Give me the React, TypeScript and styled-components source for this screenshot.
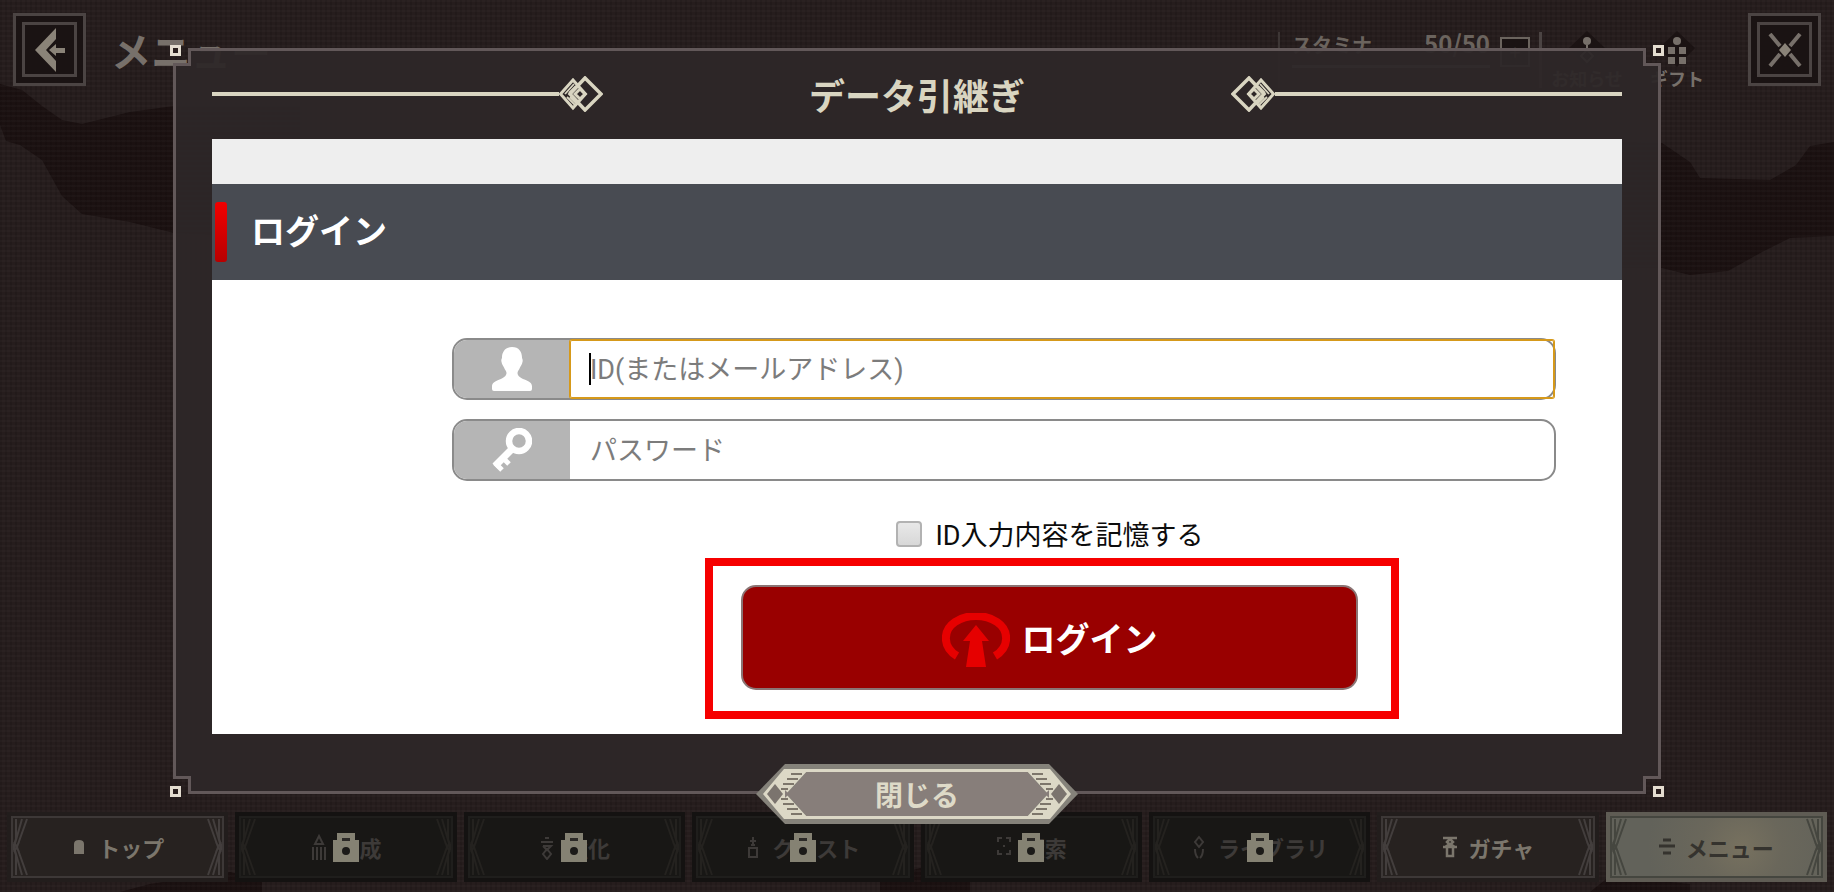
import React from "react";
import styled, { createGlobalStyle, css } from "styled-components";

const color = {
  page: "#261d1d",
  shade: "#1b1111",
  frame: "rgba(45, 39, 40, 0.95)",
  frameLine: "#625859",
  ivory: "#d9d5c1",
  dim: "#6b645e",
  slate: "#484b52",
  red: "#f60000",
  deepRed: "#990000",
  border: "#8a8a8a",
  iconCell: "#b5b5b5",
  focus: "#d6991a",
};

const GlobalStyle = createGlobalStyle`
  *, *::before, *::after { box-sizing: border-box; }
  body {
    margin: 0;
    background: ${color.page};
    font-family: Roboto, "Noto Sans CJK JP", sans-serif;
  }
  button, input { font-family: inherit; }
  button { cursor: pointer; }
  h1, h2, p { margin: 0; }
`;

const Screen = styled.div`
  position: relative;
  display: flex;
  flex-direction: column;
  min-height: 100vh;
  overflow: hidden;
  font-family: "Noto Sans CJK JP", sans-serif;
`;

const Backdrop = styled.svg`
  position: absolute;
  inset: 0;
  width: 100%;
  height: 100%;
`;

const Mesh = styled.div`
  position: absolute;
  inset: 0;
  background:
    repeating-linear-gradient(0deg, rgba(255, 255, 255, 0.02) 0 2px, transparent 2px 5px),
    repeating-linear-gradient(90deg, rgba(0, 0, 0, 0.1) 0 2px, transparent 2px 5px);
`;

/* ---------- game header ---------- */

const Header = styled.header`
  position: relative;
  display: flex;
  align-items: flex-start;
  padding: 13px;
`;

const SquareButton = styled.button`
  display: flex;
  align-items: center;
  justify-content: center;
  width: 73px;
  height: 73px;
  padding: 0;
  border: 3px solid #4b4443;
  background: #1a1313;
  outline: 3px solid #4b4443;
  outline-offset: -12px;
`;

const ScreenTitle = styled.h1`
  flex: 1;
  padding-left: 25px;
  font-size: 40px;
  line-height: 74px;
  font-weight: 700;
  color: #77706a;
`;

const Stamina = styled.div`
  display: flex;
  align-items: flex-start;
  width: 264px;
  height: 56px;
  margin-top: 19px;
  padding-left: 12px;
  border-left: 2px solid #3d3635;
  border-right: 3px solid #4b4443;
  color: ${color.dim};
`;

const StaminaValue = styled.p`
  display: flex;
  align-items: baseline;
  justify-content: space-between;
  width: 198px;
  height: 36px;
  border-bottom: 3px solid #6a6260;
  font-weight: 700;
`;

const StaminaLabel = styled.span`
  font-size: 20px;
  line-height: 22px;
`;

const StaminaCount = styled.span`
  font-size: 24px;
  line-height: 22px;
`;

const PlusButton = styled.button`
  width: 30px;
  height: 30px;
  margin: 5px 0 0 10px;
  padding: 0;
  border: 2px solid ${color.dim};
  background: #1a1313;
  color: ${color.dim};
  font-size: 20px;
  line-height: 24px;
`;

const HeaderLink = styled.button<{ $last?: boolean }>`
  display: flex;
  flex-direction: column;
  align-items: center;
  width: 90px;
  margin-top: 16px;
  margin-right: ${(p) => (p.$last ? "26px" : "0")};
  padding: 0;
  border: 0;
  background: none;
  color: #77706a;
  font-family: "Noto Sans CJK JP", sans-serif;
  font-size: 18px;
  line-height: 18px;
  font-weight: 700;
`;

/* ---------- bottom navigation ---------- */

const NavBar = styled.nav`
  position: relative;
  display: grid;
  grid-template-columns: repeat(8, 1fr);
  gap: 7px;
  margin-top: auto;
  padding: 0 7px 10px;
`;

type Tone = "normal" | "locked" | "active";

const tones = {
  normal: css`
    background: #272220;
    border-color: #221d1c;
    outline-color: #3d3837;
    color: #7b766c;
    --ornament: #433e3d;
  `,
  locked: css`
    background: #181715;
    border-color: #141211;
    outline-color: #1f1e1c;
    color: #3d3a38;
    --ornament: #24221f;
  `,
  active: css`
    background: radial-gradient(circle at 62% 50%, #77715f 0, #6a675b 30%, #62625a 70%);
    border-color: #5f5c54;
    outline-color: #45463f;
    color: #35332e;
    --ornament: #45463f;
  `,
};

const NavButton = styled.button<{ $tone: Tone }>`
  position: relative;
  display: flex;
  align-items: center;
  justify-content: space-between;
  height: 70px;
  padding: 0;
  border: 5px solid;
  outline: 2px solid;
  outline-offset: -6px;
  font-family: "Noto Sans CJK JP", sans-serif;
  font-size: 22px;
  line-height: 32px;
  font-weight: 700;
  ${(p) => tones[p.$tone]}
`;

const NavLabel = styled.span`
  display: flex;
  align-items: center;
  gap: 11px;
`;

const LockBadge = styled.svg`
  position: absolute;
  top: 50%;
  left: 50%;
  margin: -14px 0 0 -13px;
`;

/* ---------- transfer dialog ---------- */

const Overlay = styled.div`
  position: absolute;
  inset: 0;
  padding: 48px 173px;
`;

const Dialog = styled.section`
  position: relative;
  padding: 3px 39px 60px;
`;

const FrameShape = styled.div`
  position: absolute;
  inset: 0;
  border: 3px solid ${color.frameLine};
  background: ${color.frame};
  clip-path: polygon(
    15px 0, calc(100% - 15px) 0, calc(100% - 15px) 15px, 100% 15px,
    100% calc(100% - 15px), calc(100% - 15px) calc(100% - 15px), calc(100% - 15px) 100%, 15px 100%,
    15px calc(100% - 15px), 0 calc(100% - 15px), 0 15px, 15px 15px
  );
`;

type Corner = { $v: "top" | "bottom"; $h: "left" | "right" };

const Notch = styled.span<Corner>`
  position: absolute;
  ${(p) => p.$v}: -3px;
  ${(p) => p.$h}: -3px;
  width: 18px;
  height: 18px;
  border: 3px solid ${color.frameLine};
`;

const Stud = styled.span<Corner>`
  position: absolute;
  ${(p) => p.$v}: -3px;
  ${(p) => p.$h}: -3px;
  width: 11px;
  height: 11px;
  border: 3px solid #e4ddd0;
  background: #2a1f1e;
`;

const DialogHead = styled.div`
  position: relative;
  display: grid;
  grid-template-columns: 1fr 628px 1fr;
  align-items: center;
  height: 88px;
  padding-bottom: 2px;
`;

const Rule = styled.div<{ $mirrored?: boolean }>`
  display: flex;
  align-items: center;
  flex-direction: ${(p) => (p.$mirrored ? "row-reverse" : "row")};
  &::before {
    content: "";
    flex: 1;
    height: 4px;
    background: ${color.ivory};
  }
`;

const DialogTitle = styled.h2`
  font-size: 36px;
  line-height: 48px;
  font-weight: 700;
  text-align: center;
  color: ${color.ivory};
`;

const Panel = styled.div`
  position: relative;
  padding-bottom: 15px;
  background: #fff;
  font-family: Roboto, "Noto Sans CJK JP", sans-serif;
`;

const Strip = styled.div`
  height: 45px;
  background: #eee;
`;

const PanelHeading = styled.h2`
  display: flex;
  align-items: center;
  gap: 24px;
  height: 96px;
  padding-left: 3px;
  background: ${color.slate};
  color: #fff;
  font-size: 34px;
  line-height: 48px;
  font-weight: 700;
  &::before {
    content: "";
    width: 12px;
    height: 60px;
    border-radius: 3px;
    background: linear-gradient(#f20000, #b80000);
  }
`;

const Form = styled.form`
  display: flex;
  flex-direction: column;
  gap: 19px;
  padding: 58px 66px 0 240px;
`;

const Field = styled.label`
  position: relative;
  display: flex;
  height: 62px;
  border: 2px solid ${color.border};
  border-radius: 15px;
`;

const FieldIcon = styled.span`
  display: flex;
  align-items: center;
  justify-content: center;
  width: 116px;
  border-radius: 13px 0 0 13px;
  background: ${color.iconCell};
`;

const TextInput = styled.input<{ $focused?: boolean }>`
  flex: 1;
  min-width: 0;
  padding: 2px 20px 0;
  border: 0;
  border-radius: 0 13px 13px 0;
  background: transparent;
  font-size: 27px;
  color: #000;
  outline: none;
  ${(p) =>
    p.$focused &&
    css`
      border-radius: 2px;
      box-shadow: 0 0 0 1px ${color.focus}, inset 0 0 0 1px ${color.focus};
    `}
  &::placeholder {
    color: #7c7c7c;
    opacity: 1;
  }
`;

const Caret = styled.span`
  position: absolute;
  top: 13px;
  left: 135px;
  width: 2px;
  height: 32px;
  background: #000;
`;

const Actions = styled.div`
  display: flex;
  flex-direction: column;
  align-items: center;
  margin-top: 14px;
  margin-left: 96px;
`;

const Remember = styled.label`
  display: flex;
  align-items: center;
  gap: 13px;
  height: 44px;
  margin-right: 4px;
  font-size: 27px;
  line-height: 40px;
  color: #0c0c0c;
`;

const Checkbox = styled.input`
  appearance: none;
  width: 26px;
  height: 26px;
  margin: 0 0 4px;
  border: 2px solid #b2b2b2;
  border-radius: 4px;
  background: linear-gradient(#e8e8e8, #d8d8d8);
`;

const Highlight = styled.div`
  width: 100%;
  max-width: 694px;
  padding: 19px 33px 21px 28px;
  border: 8px solid ${color.red};
`;

const SubmitButton = styled.button`
  display: flex;
  align-items: center;
  justify-content: center;
  gap: 12px;
  width: 100%;
  height: 105px;
  padding: 4px 0 0;
  border: 2px solid #8a7474;
  border-radius: 15px;
  background: ${color.deepRed};
  color: #fff;
  font-size: 34px;
  line-height: 48px;
  font-weight: 700;
`;

const CloseButton = styled.button`
  position: absolute;
  bottom: -30px;
  left: 50%;
  display: grid;
  place-items: center;
  width: 322px;
  height: 60px;
  margin-left: -161px;
  padding: 0;
  border: 0;
  background: none;
  color: #dedac8;
  font-family: "Noto Sans CJK JP", sans-serif;
  font-size: 28px;
  line-height: 40px;
  font-weight: 700;
  > * {
    grid-area: 1 / 1;
  }
`;

/* ---------- drawings ---------- */

const Diamonds = ({ flip }: { flip?: boolean }) => (
  <svg width="44" height="36" viewBox="0 0 44 36" fill="none" stroke={color.ivory}>
    <g transform={flip ? "matrix(-1 0 0 1 44 0)" : undefined}>
      <path d="M1.500 18 14 4l12.500 14L14 32z" strokeWidth="3" />
      <path d="M11 18 26 2l16 16-16 16z" strokeWidth="3.500" />
      <path d="M6 18l9-10M8 21l8 8M10 17l7-7M11 21l6 6" strokeWidth="1.800" />
      <path d="M16 18l5-5 5 5-5 5z" strokeWidth="3" />
    </g>
  </svg>
);

const Ornament = ({ flip }: { flip?: boolean }) => (
  <svg width="16" height="60" viewBox="0 0 16 60" fill="none" stroke="var(--ornament)" strokeWidth="2">
    <path
      transform={flip ? "matrix(-1 0 0 1 16 0)" : undefined}
      d="M15 2 5 30l10 28M10 2 2 30l8 28M4 2v20L1 30l3 8v20M2 25l5 10M7 25 2 35"
    />
  </svg>
);

const ClosePlate = () => {
  const end = (
    <>
      <path d="M28 5h25L30 30l23 25H28L7 30z" fill="#dcd8c6" stroke="none" />
      <path
        d="M35 10h11M31 15h11M27 20h11M25 25h7M35 50h11M31 45h11M27 40h11M25 35h7"
        stroke="#7d766b"
        strokeWidth="2"
      />
      <path d="M19 20 11 30l8 10 8-10z" fill="#7b746e" stroke="none" />
      <path d="M29 26l4 4-4 4z" fill="#877e7a" stroke="none" />
    </>
  );
  return (
    <svg width="322" height="60" viewBox="0 0 322 60" fill="none" stroke="#dcd8c6">
      <path d="M0 30 29 0h264l29 30-29 30H29z" fill="#85827a" stroke="none" />
      <path d="M52 6.500h218L291 30l-21 23.500H52L31 30z" fill="#877e7a" stroke="none" />
      <path d="M28 6.500h266M28 53.500h266" strokeWidth="3" />
      <g>{end}</g>
      <g transform="matrix(-1 0 0 1 322 0)">{end}</g>
    </svg>
  );
};

const Lock = () => (
  <LockBadge width="26" height="29" viewBox="0 0 26 29">
    <path d="M4 0h18v7h4v22H0V7h4z" fill="#858273" />
    <path d="M9 5h8v3H9z" fill="#2b2926" />
    <circle cx="13" cy="18" r="4" fill="#1b1a18" />
  </LockBadge>
);

const navIcons: Record<string, React.ReactNode> = {
  top: <path d="M3 20V10q0-4 5-4t5 4v10z" fill="currentColor" stroke="none" />,
  train: <path d="M8 2l4 8H4zM2 13v13M6 13v13M10 13v13M14 13v13" />,
  enhance: <path d="M2 8h12M6 4h4M4 12h8l-4 4-4-4M8 15l4 5-4 5-4-5z" />,
  quest: <path d="M8 3v8M5 7h6M4 14h8v9H4zM6 11h4" />,
  search: <path d="M2 8V4h4M10 4h4v4M14 16v4h-4M6 20H2v-4M7 12h2" />,
  library: <path d="M8 3l4 5-4 5-4-5zM4 15q0 6 3 9M12 15q0 6-3 9" />,
  gacha: <path d="M1 4h14M5 8l3-3 3 3-3 3zM1 13h14M3 13l5-3 5 3M5 14v8h6v-8" strokeWidth="2.500" />,
  menu: <path d="M4 6h8M0 12h16M4 19h8" strokeWidth="3" />,
};

const NavIcon = ({ name }: { name: string }) => (
  <svg width="16" height="26" viewBox="0 0 16 26" fill="none" stroke="currentColor" strokeWidth="2">
    {navIcons[name]}
  </svg>
);

const navItems: { icon: string; label: string; tone: Tone }[] = [
  { icon: "top", label: "トップ", tone: "normal" },
  { icon: "train", label: "育成", tone: "locked" },
  { icon: "enhance", label: "強化", tone: "locked" },
  { icon: "quest", label: "クエスト", tone: "locked" },
  { icon: "search", label: "探索", tone: "locked" },
  { icon: "library", label: "ライブラリ", tone: "locked" },
  { icon: "gacha", label: "ガチャ", tone: "normal" },
  { icon: "menu", label: "メニュー", tone: "active" },
];

const corners: Corner[] = [
  { $v: "top", $h: "left" },
  { $v: "top", $h: "right" },
  { $v: "bottom", $h: "left" },
  { $v: "bottom", $h: "right" },
];

export default function App() {
  return (
    <Screen>
      <GlobalStyle />
      <Backdrop viewBox="0 0 1834 892" preserveAspectRatio="none" aria-hidden="true">
        <g fill={color.shade}>
          <path d="M0 84 22 90 42 106 62 120 82 124 130 112 174 106 300 106V240L174 233 130 222 82 214 62 196 52 178 42 160 20 145 6 141 0 125z" />
          <path d="M1560 140 1662 143 1690 162 1700 178 1770 180 1796 165 1810 146 1834 142V236L1790 238 1762 252 1728 271 1690 275 1662 268H1560z" />
          <path d="M120 892 150 884 230 872 262 880V892zM880 892V880L920 868 970 880V892zM1590 892 1610 876 1690 884V892z" />
        </g>
      </Backdrop>
      <Mesh />

      <Header>
        <SquareButton type="button" aria-label="戻る">
          <svg width="32" height="44" viewBox="0 0 32 44" fill="#8a8378">
            <path d="M22 0v11L12 22l10 11v11L1 22z" />
            <path d="M15 22l7-6v4h9v5h-9v3z" />
          </svg>
        </SquareButton>
        <ScreenTitle>メニュー</ScreenTitle>
        <Stamina>
          <StaminaValue>
            <StaminaLabel>スタミナ</StaminaLabel>
            <StaminaCount>50/50</StaminaCount>
          </StaminaValue>
          <PlusButton type="button">+</PlusButton>
        </Stamina>
        <HeaderLink type="button">
          <svg width="44" height="40" viewBox="0 0 44 40">
            <path d="M22 2l18 17-18 19L4 19z" fill="#1b1313" />
            <circle cx="22" cy="12" r="4" fill="#77706a" />
            <path d="M22 16v5M22 21l6 6-6 6-6-6z" fill="none" stroke="#77706a" strokeWidth="2" />
          </svg>
          お知らせ
        </HeaderLink>
        <HeaderLink type="button" $last>
          <svg width="44" height="40" viewBox="0 0 44 40">
            <path d="M22 2l18 17-18 19L4 19z" fill="#1b1313" />
            <circle cx="22" cy="12" r="4" fill="#77706a" />
            <path d="M13 18h7v7h-7zM24 18h7v7h-7zM13 28h7v7h-7zM24 28h7v7h-7z" fill="#77706a" />
          </svg>
          ギフト
        </HeaderLink>
        <SquareButton type="button" aria-label="メニューを閉じる">
          <svg width="34" height="34" viewBox="0 0 34 34">
            <path d="M2 1l10 12M32 1 22 13M2 33l10-12M32 33 22 21" stroke="#77706a" strokeWidth="4" />
            <path d="M17 10l6 7-6 7-6-7z" fill="#8a8378" />
          </svg>
        </SquareButton>
      </Header>

      <NavBar>
        {navItems.map((item) => (
          <NavButton key={item.label} type="button" $tone={item.tone}>
            <Ornament />
            <NavLabel>
              <NavIcon name={item.icon} />
              {item.label}
            </NavLabel>
            <Ornament flip />
            {item.tone === "locked" && <Lock />}
          </NavButton>
        ))}
      </NavBar>

      <Overlay>
        <Dialog role="dialog" aria-labelledby="dialog-title">
          <FrameShape>
            {corners.map((c) => (
              <Notch key={c.$v + c.$h} {...c} />
            ))}
          </FrameShape>
          {corners.map((c) => (
            <Stud key={c.$v + c.$h} {...c} />
          ))}

          <DialogHead>
            <Rule>
              <Diamonds />
            </Rule>
            <DialogTitle id="dialog-title">データ引継ぎ</DialogTitle>
            <Rule $mirrored>
              <Diamonds flip />
            </Rule>
          </DialogHead>

          <Panel>
            <Strip />
            <PanelHeading>ログイン</PanelHeading>
            <Form onSubmit={(e) => e.preventDefault()}>
              <Field>
                <FieldIcon>
                  <svg width="40" height="44" viewBox="0 0 40 44" fill="#fff">
                    <path d="M20 0c7 0 10 5 10 10.500 0 1 1 2 .6 4C30 18 28.500 19 28 20.500 27 23 25.500 24 25.500 26c0 3 3 5 7 6.500 5 2 7.500 3.500 7.500 7V42q0 2-2 2H2q-2 0-2-2v-2.500c0-3.500 2.500-5 7.500-7 4-1.500 7-3.500 7-6.500 0-2-1.500-3-2.500-5.500-.5-1.500-2-2.500-2.600-6-.4-2 .6-3 .6-4C10 5 13 0 20 0z" />
                  </svg>
                </FieldIcon>
                <TextInput
                  type="text"
                  name="loginId"
                  aria-label="ID(またはメールアドレス)"
                  placeholder="ID(またはメールアドレス)"
                  $focused
                />
                <Caret />
              </Field>
              <Field>
                <FieldIcon>
                  <svg width="40" height="44" viewBox="0 0 40 44" fill="none" stroke="#fff">
                    <circle cx="27" cy="13" r="10" strokeWidth="6.500" />
                    <path d="M20 21 3 38" strokeWidth="7" />
                    <path d="M3 35l7 7M10 29l7 7" strokeWidth="5" />
                  </svg>
                </FieldIcon>
                <TextInput type="password" name="password" aria-label="パスワード" placeholder="パスワード" />
              </Field>
              <Actions>
                <Remember>
                  <Checkbox type="checkbox" name="remember" />
                  ID入力内容を記憶する
                </Remember>
                <Highlight>
                  <SubmitButton type="submit">
                    <svg width="68" height="54" viewBox="0 0 68 54">
                      <path
                        d="M15 43C0 34 1 17 13 9c12-8 30-8 42 0 12 8 13 25-2 34"
                        fill="none"
                        stroke="#e60000"
                        strokeWidth="8"
                      />
                      <path d="M34 12 47 28h-7l4 26H24l4-26h-7z" fill="#e60000" />
                    </svg>
                    ログイン
                  </SubmitButton>
                </Highlight>
              </Actions>
            </Form>
          </Panel>

          <CloseButton type="button">
            <ClosePlate />
            <span>閉じる</span>
          </CloseButton>
        </Dialog>
      </Overlay>
    </Screen>
  );
}
